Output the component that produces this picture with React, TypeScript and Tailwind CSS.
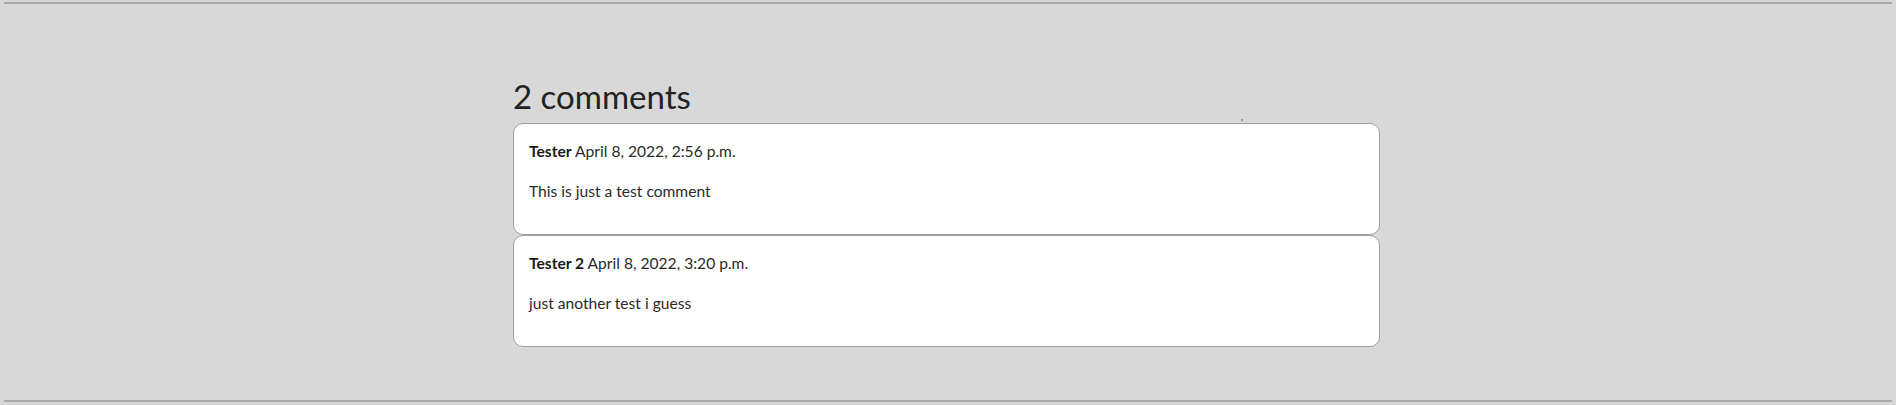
export default function App() {
  const comments = [
    { name: "Tester", date: "April 8, 2022, 2:56 p.m.", body: "This is just a test comment" },
    { name: "Tester 2", date: "April 8, 2022, 3:20 p.m.", body: "just another test i guess" },
  ];
  return (
    <div
      className="relative flex h-[405px] w-full flex-col bg-[#d8d8d8] text-[#222]"
      style={{ fontFamily: "Lato, 'Noto Sans', sans-serif" }}
    >
      <div className="mx-[4px] mt-[2px] h-[2px] bg-[#a8a8a8]" />
      <div className="ml-[513px] mt-[71px] w-[867px]">
        <h2 className="h-[48px] text-[33px] leading-[43px] font-normal">2 comments</h2>
        <div className="flex flex-col">
          {comments.map((c) => (
            <div
              key={c.name}
              className="h-[112px] rounded-[10px] border border-[#a0a0a0] bg-white px-[15px] pt-[17px] text-[15.6px] leading-[20px] text-[#2a2a2a]"
            >
              <p>
                <span className="font-bold text-[#1a1a1a]">{c.name}</span> {c.date}
              </p>
              <p className="mt-[20px]">{c.body}</p>
            </div>
          ))}
        </div>
      </div>
      <div className="absolute left-[1241px] top-[119px] h-[2px] w-[2px] rounded-full bg-[#888]" />
      <div className="mt-auto mx-[4px] mb-[3px] h-[2px] bg-[#a8a8a8]" />
    </div>
  );
}
